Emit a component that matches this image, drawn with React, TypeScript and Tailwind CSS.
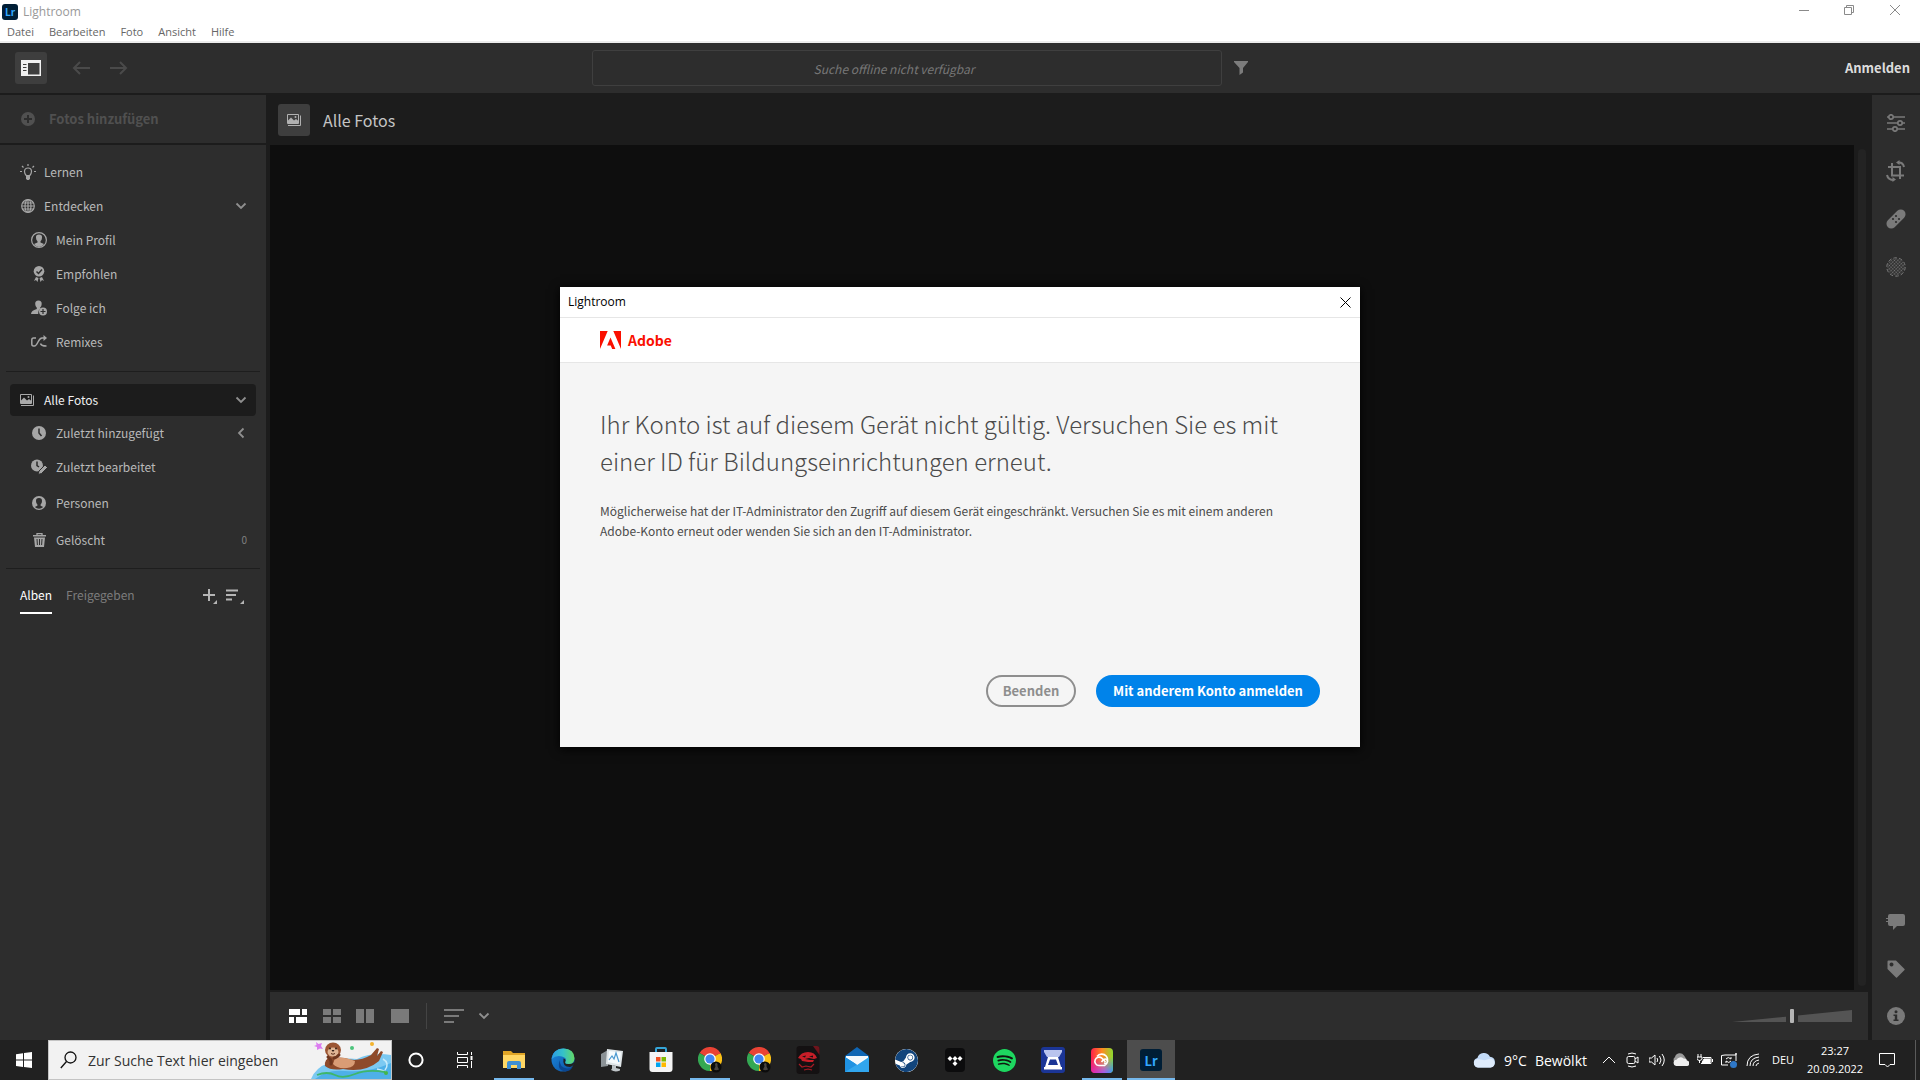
import type { ReactNode } from 'react'
import { SiSpotify, SiSteam } from 'react-icons/si'

const menu = ['Datei', 'Bearbeiten', 'Foto', 'Ansicht', 'Hilfe']

const discover = [
  { label: 'Mein Profil', icon: <ProfileIcon /> },
  { label: 'Empfohlen', icon: <BadgeIcon /> },
  { label: 'Folge ich', icon: <FollowIcon /> },
  { label: 'Remixes', icon: <RemixIcon /> },
]

const editTools = [
  { label: 'Bearbeiten', icon: <SlidersIcon /> },
  { label: 'Zuschneiden', icon: <CropIcon /> },
  { label: 'Reparatur', icon: <BandageIcon /> },
  { label: 'Maskieren', icon: <MaskIcon /> },
]

const infoTools = [
  { label: 'Kommentare', icon: <CommentIcon /> },
  { label: 'Stichwörter', icon: <TagIcon /> },
  { label: 'Info', icon: <InfoIcon /> },
]

const apps = [
  { label: 'Cortana', icon: <CortanaIcon />, state: '' },
  { label: 'Aktive Anwendungen', icon: <TaskViewIcon />, state: '' },
  { label: 'Explorer', icon: <ExplorerIcon />, state: 'open' },
  { label: 'Edge', icon: <EdgeIcon />, state: '' },
  { label: 'Leistung', icon: <MonitorIcon />, state: '' },
  { label: 'Store', icon: <StoreIcon />, state: '' },
  { label: 'Chrome', icon: <ChromeIcon />, state: 'open' },
  { label: 'Chrome Profil', icon: <ChromeIcon />, state: '' },
  { label: 'Spiel', icon: <SkullIcon />, state: '' },
  { label: 'Mail', icon: <MailIcon />, state: '' },
  { label: 'Steam', icon: <SteamIcon />, state: '' },
  { label: 'Tidal', icon: <TidalIcon />, state: '' },
  { label: 'Spotify', icon: <SpotifyIcon />, state: '' },
  { label: 'Scanner', icon: <ScannerIcon />, state: '' },
  { label: 'Creative Cloud', icon: <CloudAppIcon />, state: 'open' },
  { label: 'Lightroom', icon: <LrLogo className="size-[22px] text-[13px]" />, state: 'active' },
]

export default function App() {
  return (
    <div className="relative flex h-screen flex-col overflow-hidden bg-[#1c1c1c] font-['Noto_Sans_CJK_SC',sans-serif] text-[12px] text-[#b9b9b9]">
      <TitleBar />
      <TopBar />
      <div className="flex min-h-0 flex-1 pt-0.5">
        <Sidebar />
        <main className="ml-1 flex min-w-0 flex-1 flex-col">
          <header className="flex h-[50px] shrink-0 items-center gap-[13px] pl-2">
            <button aria-label="Alben" className="flex size-8 items-center justify-center rounded-[3px] bg-[#3e3e3e]">
              <PhotosIcon className="h-3 w-3.5 text-[#b0b0b0]" />
            </button>
            <h1 className="text-[16px] text-[#c4c4c4]">Alle Fotos</h1>
          </header>
          <div className="flex min-h-0 flex-1">
            <div className="flex-1 bg-[#0e0e0e]" />
            <div className="mx-1 my-1 w-2 rounded-full bg-[#232323]" />
          </div>
          <Footer />
        </main>
        <aside className="ml-0.5 flex w-12 flex-col justify-between bg-[#2d2d2d] pt-1 text-[#7a7a7a]">
          <div>
            {editTools.map((t) => (
              <button key={t.label} aria-label={t.label} className="flex size-12 items-center justify-center">{t.icon}</button>
            ))}
          </div>
          <div>
            {infoTools.map((t) => (
              <button key={t.label} aria-label={t.label} className="flex size-12 items-center justify-center">{t.icon}</button>
            ))}
          </div>
        </aside>
      </div>
      <Taskbar />
      <AccountDialog />
    </div>
  )
}

function TitleBar() {
  return (
    <div className="shrink-0 border-b-2 border-[#ececec] bg-white font-['Open_Sans',sans-serif]">
      <div className="flex h-6 items-center">
        <LrLogo className="ml-0.5 size-4 text-[10px]" />
        <span className="ml-[5px] text-[12px] text-[#999]">Lightroom</span>
        <div className="ml-auto flex h-6 pr-0.5 pb-1 text-[#8a8a8a]">
          <button aria-label="Minimieren" className="flex w-[45px] items-center justify-center">
            <svg width="10" height="10"><path d="M0 5.500h10" stroke="currentColor" /></svg>
          </button>
          <button aria-label="Verkleinern" className="flex w-[46px] items-center justify-center">
            <svg width="10" height="10" fill="none" stroke="currentColor"><path d="M.5 2.500h7v7h-7zM2.500 2.500v-2h7v7h-2" /></svg>
          </button>
          <button aria-label="Schließen" className="flex w-[46px] items-center justify-center">
            <svg width="10" height="10" stroke="currentColor"><path d="M0 0l10 10M10 0L0 10" /></svg>
          </button>
        </div>
      </div>
      <nav className="flex h-[17px] items-center gap-[15px] pl-[7px] text-[11px] text-[#666]">
        {menu.map((m) => (
          <button key={m}>{m}</button>
        ))}
      </nav>
    </div>
  )
}

function TopBar() {
  return (
    <div className="grid h-[50px] shrink-0 grid-cols-[592fr_630px_698fr] items-center bg-[#2d2d2d]">
      <div className="flex items-center pl-[15px]">
        <button aria-label="Seitenleiste" className="flex size-8 items-center justify-center rounded-[3px] bg-[#3e3e3e] text-[#f0f0f0]">
          <svg width="20" height="16" viewBox="0 0 20 16">
            <path fillRule="evenodd" fill="currentColor" d="M0 0h20v16H0zM7 3v11.500h11.500V3zM2 4h3.500v1H2zM2 7h3.500v1H2zM2 10h3.500v1H2z" />
          </svg>
        </button>
        <button aria-label="Zurück" disabled className="ml-[25px] text-[#4a4a4a]">
          <ArrowIcon />
        </button>
        <button aria-label="Vorwärts" disabled className="ml-5 rotate-180 text-[#4a4a4a]">
          <ArrowIcon />
        </button>
      </div>
      <input
        aria-label="Suche"
        disabled
        placeholder="Suche offline nicht verfügbar"
        className="h-9 rounded-[3px] border border-[#3f3f3f] bg-transparent pr-[26px] text-center text-[12px] italic placeholder:text-[#777]"
      />
      <div className="flex items-center justify-between pr-2.5 pl-3">
        <button aria-label="Filter" className="text-[#7c7c7c]">
          <svg width="14" height="14" viewBox="0 0 14 14" fill="currentColor"><path d="M0 0h14v1L9 7v4.500L5.500 14V7L0 1z" /></svg>
        </button>
        <button className="text-[13px] font-bold text-[#dcdcdc]">Anmelden</button>
      </div>
    </div>
  )
}

function Sidebar() {
  return (
    <aside className="flex w-[266px] shrink-0 flex-col">
      <button disabled className="flex h-12 shrink-0 items-center gap-3.5 bg-[#2d2d2d] pl-[21px] text-[13px] font-bold text-[#505050]">
        <svg width="14" height="14" viewBox="0 0 14 14"><circle cx="7" cy="7" r="7" fill="currentColor" /><path d="M7 3v8M3 7h8" stroke="#2d2d2d" strokeWidth="2" /></svg>
        Fotos hinzufügen
      </button>
      <nav className="mt-0.5 flex-1 bg-[#2d2d2d] px-1.5 pt-2.5">
        <Row icon={<BulbIcon />} label="Lernen" />
        <Row icon={<GlobeIcon />} label="Entdecken" end={<Chevron />} />
        {discover.map((d) => (
          <Row key={d.label} icon={d.icon} label={d.label} nested />
        ))}
        <hr className="mt-3 border-[#1e1e1e]" />
        <button className="mx-1 mt-3 flex h-8 w-[246px] items-center rounded bg-[#1c1c1c] pr-[9px] pl-2.5 text-[#f0f0f0]">
          <span className="w-6"><PhotosIcon className="h-3 w-3.5 text-[#aaa]" /></span>
          <span className="flex-1 text-left">Alle Fotos</span>
          <Chevron />
        </button>
        <Row icon={<ClockIcon />} label="Zuletzt hinzugefügt" end={<Chevron className="rotate-90" />} nested />
        <Row icon={<ClockEditIcon />} label="Zuletzt bearbeitet" nested />
        <Row icon={<PersonIcon />} label="Personen" nested tall />
        <Row icon={<TrashIcon />} label="Gelöscht" end={<span className="text-[10px] text-[#808080]">0</span>} nested tall />
        <hr className="mt-2.5 border-[#1e1e1e]" />
        <div className="flex pt-[9px] pr-3 pl-3.5">
          <button className="h-9 border-b-2 border-white text-white">Alben</button>
          <button className="ml-3.5 h-9 border-b-2 border-transparent text-[#7c7c7c]">Freigegeben</button>
          <button aria-label="Album hinzufügen" className="ml-auto text-[#b5b5b5]">
            <svg width="16" height="18" viewBox="0 0 16 18"><path d="M7 2v12M1 8h12" stroke="currentColor" strokeWidth="2" /><path d="M15 13v4h-4z" fill="currentColor" /></svg>
          </button>
          <button aria-label="Sortieren" className="mr-1 ml-2 text-[#b5b5b5]">
            <svg width="18" height="18" viewBox="0 0 18 18"><path d="M0 3.500h12M0 8h10M0 12.500h6" stroke="currentColor" strokeWidth="2" /><path d="M18 13v4h-4z" fill="currentColor" /></svg>
          </button>
        </div>
      </nav>
    </aside>
  )
}

type RowProps = { icon: ReactNode; label: string; end?: ReactNode; nested?: boolean; tall?: boolean }

function Row({ icon, label, end, nested, tall }: RowProps) {
  return (
    <button className={`flex w-full items-center pr-[13px] ${tall ? 'h-[37px]' : 'h-[34px]'} ${nested ? 'pl-[25px]' : 'pl-3.5'}`}>
      <span className={`text-[#a6a6a6] ${nested ? 'w-[25px]' : 'w-6'}`}>{icon}</span>
      <span className="flex-1 text-left">{label}</span>
      {end}
    </button>
  )
}

function Footer() {
  return (
    <footer className="mt-0.5 mr-0.5 flex h-12 shrink-0 items-center bg-[#2d2d2d] pr-4 pl-[19px] text-[#7a7a7a]">
      <button aria-label="Fotoraster" className="text-white">
        <svg width="18" height="14" fill="currentColor"><path d="M0 0h11v6H0zM13 0h5v6h-5zM0 8h5v6H0zM7 8h11v6H7z" /></svg>
      </button>
      <button aria-label="Quadratraster" className="ml-4">
        <svg width="18" height="14" fill="currentColor"><path d="M0 0h8v6H0zM10 0h8v6h-8zM0 8h8v6H0zM10 8h8v6h-8z" /></svg>
      </button>
      <button aria-label="Vergleichen" className="ml-[15px]">
        <svg width="18" height="14" fill="currentColor"><path d="M0 0h8v14H0zM10 0h8v14h-8z" /></svg>
      </button>
      <button aria-label="Detail" className="ml-[17px]">
        <svg width="18" height="14" fill="currentColor"><path d="M0 0h18v14H0z" /></svg>
      </button>
      <div className="ml-[17px] h-[26px] w-px bg-[#444]" />
      <button aria-label="Sortieren" className="ml-[17px] flex items-center gap-[13px]">
        <svg width="21" height="14" viewBox="0 0 21 14"><path d="M0 1h20M0 7h15M0 13h10" stroke="currentColor" strokeWidth="2" /></svg>
        <Chevron className="text-[#8a8a8a]" />
      </button>
      <div className="relative ml-auto h-3.5 w-[120px]">
        <svg className="absolute inset-0" width="120" height="14"><path d="M0 13L120 1v12z" fill="#545454" /></svg>
        <input
          type="range"
          aria-label="Miniaturgröße"
          defaultValue={50}
          className="absolute inset-0 w-full appearance-none bg-transparent [&::-webkit-slider-thumb]:h-3.5 [&::-webkit-slider-thumb]:w-1 [&::-webkit-slider-thumb]:appearance-none [&::-webkit-slider-thumb]:rounded-[1px] [&::-webkit-slider-thumb]:bg-[#b5b5b5] [&::-webkit-slider-thumb]:shadow-[-4px_0_0_#2d2d2d,4px_0_0_#2d2d2d]"
        />
      </div>
    </footer>
  )
}

function AccountDialog() {
  return (
    <div className="pointer-events-none absolute inset-0 flex items-center justify-center pb-[46px]">
      <div role="dialog" aria-label="Lightroom" className="pointer-events-auto flex h-[460px] w-[800px] flex-col bg-[#f5f5f5] text-[#4b4b4b] shadow-[0_2px_10px_#000]">
        <div className="flex h-[30px] items-center justify-between bg-white pr-[9px] pl-2 font-['Open_Sans',sans-serif] text-[12px] text-black">
          Lightroom
          <button aria-label="Schließen">
            <svg width="11" height="11" stroke="currentColor"><path d="M.5.5l10 10M10.500.5l-10 10" /></svg>
          </button>
        </div>
        <div className="flex h-[46px] items-center border-y border-[#e6e6e6] bg-white pl-10 text-[#fa0f00]">
          <svg width="21" height="18" viewBox="0 0 21 18" fill="currentColor"><path d="M0 0h7.700L0 18zM13.300 0H21v18zM10.500 6.600L15.400 18h-3.200l-1.500-3.600H7.100z" /></svg>
          <span className="ml-[7px] text-[14px] font-bold">Adobe</span>
        </div>
        <div className="flex flex-1 flex-col px-10 pt-[42px]">
          <h2 className="text-[24px] leading-[37px] font-light">
            Ihr Konto ist auf diesem Gerät nicht gültig. Versuchen Sie es mit einer ID für Bildungseinrichtungen erneut.
          </h2>
          <p className="mt-[22px] text-[12px] leading-5">
            Möglicherweise hat der IT-Administrator den Zugriff auf diesem Gerät eingeschränkt. Versuchen Sie es mit einem anderen{' '}
            <span className="whitespace-nowrap">Adobe-Konto</span> erneut oder wenden Sie sich an den IT-Administrator.
          </p>
          <div className="mt-auto mb-10 flex justify-end gap-5 text-[13px] font-bold">
            <button className="h-8 w-[90px] rounded-full border-2 border-[#8e8e8e] text-[#8e8e8e]">Beenden</button>
            <button className="h-8 w-56 rounded-full bg-[#0083ea] text-white">Mit anderem Konto anmelden</button>
          </div>
        </div>
      </div>
    </div>
  )
}

function Taskbar() {
  return (
    <div className="flex h-10 shrink-0 items-center bg-[#212121] font-['Open_Sans',sans-serif] text-white">
      <button aria-label="Start" className="flex w-12 justify-center">
        <svg width="16" height="16" viewBox="0 0 16 16" fill="currentColor"><path d="M0 2.200l7-1v6.400H0zM8 1.100L16 0v7.600H8zM0 8.400h7v6.500l-7-1zM8 8.400h8V16l-8-1.100z" /></svg>
      </button>
      <div className="relative flex h-10 w-[344px] items-center border border-[#c4c4c4] bg-[#f2f2f2] text-black">
        <svg className="ml-[11px]" width="18" height="18" viewBox="0 0 18 18" fill="none" stroke="#111" strokeWidth="1.300"><circle cx="10.500" cy="6.500" r="5.500" /><path d="M6.500 10.500L.8 17" /></svg>
        <input aria-label="Suche" placeholder="Zur Suche Text hier eingeben" className="ml-2.5 w-[220px] bg-transparent text-[14px] placeholder:text-[#333]" />
        <Otter />
      </div>
      <div className="flex gap-px">
        {apps.map((a) => (
          <button
            key={a.label}
            aria-label={a.label}
            className={`relative flex h-10 w-12 items-center justify-center ${a.state === 'active' ? 'bg-[#4d4d4d]' : ''}`}
          >
            {a.icon}
            {a.state && <span className={`absolute bottom-0 h-0.5 bg-[#76b9ed] ${a.state === 'active' ? 'inset-x-0' : 'inset-x-1'}`} />}
          </button>
        ))}
      </div>
      <div className="ml-auto flex items-center">
        <button className="flex items-center text-[14px]">
          <svg width="23" height="16" viewBox="0 0 23 16"><path d="M5 15.500a4.800 4.800 0 0 1-.6-9.400A6.700 6.700 0 0 1 16.900 4.800 5.400 5.400 0 0 1 17.500 15.500z" fill="#c3dbf8" /><path d="M5 15.500a4.500 4.500 0 0 1-3-7.500c4-3 8 2 12-.5 4-2 8 0 7.500 4a4.500 4.500 0 0 1-4 4z" fill="#deebfb" /></svg>
          <span className="ml-2">9°C</span>
          <span className="ml-2">Bewölkt</span>
        </button>
        <div className="ml-2.5 flex items-center">
          <TrayButton label="Ausgeblendete Symbole">
            <path d="M2 11l6-6 6 6" />
          </TrayButton>
          <TrayButton label="Besprechung">
            <rect x="2" y="4.500" width="8" height="7" rx="1.500" /><path d="M10 7l3-2v6l-3-2M3 2q4-2 8 0M3 14q4 2 8 0" />
          </TrayButton>
          <TrayButton label="Lautstärke">
            <path d="M0 6v4h2.500L6 13V3L2.500 6zM8 6q1.500 2 0 4M10.500 4q3 4 0 8M13 2q4.500 6 0 12" />
          </TrayButton>
          <TrayButton label="OneDrive">
            <path d="M3 11a3.300 3.300 0 0 1-1-6 5 5 0 0 1 9-1.500L14 8z" fill="#9a9a9a" stroke="none" /><path d="M3 14a3.200 3.200 0 0 1 .5-6.300 4.500 4.500 0 0 1 7-1.200 3.500 3.500 0 0 1 3.500 2 2.800 2.800 0 0 1 0 5.500z" fill="#eee" stroke="none" />
          </TrayButton>
          <TrayButton label="Akku">
            <path d="M1 2v3M4 2v3M0 5h5v2q0 1-2.500 1.500Q0 8 0 7zM2.500 8v3" /><path d="M6 5.500h8v6H4" /><path d="M7 7h6v3.500H5z" fill="currentColor" /><path d="M15.500 7v3" />
          </TrayButton>
          <TrayButton label="Anzeige">
            <path d="M7 13H.5V3.500L4 3h11V1v8M5 7q2-3 5 0V5M10 9q-2 3-5 0v2" /><circle cx="12.500" cy="12.500" r="3.500" fill="#2f78c8" stroke="none" />
          </TrayButton>
          <TrayButton label="Netzwerk">
            <path d="M2 14Q2 3 14 2M5 14q0-8 9-9M8 14q0-5 6-6M11 14q0-2 3-3" />
          </TrayButton>
        </div>
        <button className="ml-1.5 w-6 text-[11px]">DEU</button>
        <button className="ml-1.5 w-[68px] text-[11px] leading-[18px]">
          23:27
          <br />
          20.09.2022
        </button>
        <button aria-label="Benachrichtigungen" className="flex w-[35px] justify-center">
          <svg width="16" height="16" viewBox="0 0 16 16" fill="none" stroke="currentColor"><path d="M.5 1.500h15v11H11L8.500 15 6 12.500H.5z" /></svg>
        </button>
        <div className="mr-1 ml-[11px] h-10 w-px bg-[#5a5a5a]" />
      </div>
    </div>
  )
}

function TrayButton({ label, children }: { label: string; children: ReactNode }) {
  return (
    <button aria-label={label} className="flex w-6 justify-center">
      <svg width="16" height="16" viewBox="0 0 16 16" fill="none" stroke="currentColor">{children}</svg>
    </button>
  )
}

function LrLogo({ className }: { className: string }) {
  return (
    <span className={`flex items-center justify-center rounded-[3px] bg-[#001e36] font-['Noto_Sans_CJK_SC',sans-serif] leading-none font-bold text-[#31a8ff] ${className}`}>
      Lr
    </span>
  )
}

function Chevron({ className = '' }: { className?: string }) {
  return (
    <svg className={className} width="12" height="12" viewBox="0 0 12 12" fill="none" stroke="#8f8f8f" strokeWidth="1.800"><path d="M1.500 3.500L6 8l4.500-4.500" /></svg>
  )
}

function ArrowIcon() {
  return (
    <svg width="18" height="14" viewBox="0 0 18 14" fill="none" stroke="currentColor" strokeWidth="2"><path d="M18 7H2M8 1L2 7l6 6" /></svg>
  )
}

function PhotosIcon({ className }: { className: string }) {
  return (
    <svg className={className} viewBox="0 0 14 12" fill="none" stroke="currentColor">
      <path d="M.5.5h11v9H.5zM13.500 1.500v10H1" /><path d="M1 9V6.500l3-3 3 3 2-1.500 2.500 2V9z" fill="currentColor" stroke="none" /><circle cx="8.500" cy="3" r="1" fill="currentColor" stroke="none" />
    </svg>
  )
}

function BulbIcon() {
  return (
    <svg width="16" height="16" viewBox="0 0 16 16" fill="none" stroke="currentColor" strokeWidth="1.200">
      <path d="M6.200 11.500Q4.500 9.500 4.500 7.500a3.500 3.500 0 0 1 7 0q0 2-1.700 4z" /><path d="M6 12h4v2.500l-1 1.500H7l-1-1.500z" fill="currentColor" stroke="none" /><path d="M8 0v2M2 2l1.500 1.500M14 2l-1.500 1.500M0 7.500h2M14 7.500h2" />
    </svg>
  )
}

function GlobeIcon() {
  return (
    <svg className="ml-px" width="14" height="14" viewBox="0 0 14 14" fill="none" stroke="currentColor" strokeWidth="1.200">
      <circle cx="7" cy="7" r="6.300" /><ellipse cx="7" cy="7" rx="3" ry="6.300" /><path d="M7 1v12M1 7h12M1.500 4h11M1.500 10h11" />
    </svg>
  )
}

function ProfileIcon() {
  return (
    <svg width="16" height="16" viewBox="0 0 16 16">
      <circle cx="8" cy="8" r="7.400" fill="none" stroke="currentColor" strokeWidth="1.200" />
      <path d="M8 2.500a3 3 0 0 1 3 3.300q0 2-1.500 3.500v1.200l3.500 1.500q-2 3-5 3t-5-3l3.500-1.500V9.300Q5 7.800 5 5.800a3 3 0 0 1 3-3.300z" fill="currentColor" />
    </svg>
  )
}

function BadgeIcon() {
  return (
    <svg width="16" height="16" viewBox="0 0 16 16">
      <circle cx="8" cy="5.300" r="5.300" fill="currentColor" /><path d="M5.500 5.500l2 2 3.500-4" fill="none" stroke="#2d2d2d" strokeWidth="1.500" />
      <path d="M5 11l2.500 1-1 4-1.500-2-2 1zM11 11l-2.500 1 1 4 1.500-2 2 1z" fill="currentColor" />
    </svg>
  )
}

function FollowIcon() {
  return (
    <svg width="16" height="16" viewBox="0 0 16 16">
      <path d="M7.500.5a3.300 3.300 0 0 1 3.200 3.500q0 2-1.600 3.700v1.200Q7.200 10 7.200 14H0q0-3.500 5.800-5V7.700Q4.200 6 4.200 4A3.300 3.300 0 0 1 7.500.5z" fill="currentColor" />
      <circle cx="12" cy="11.500" r="4" fill="currentColor" /><path d="M12 9v5M9.500 11.500h5" stroke="#2d2d2d" strokeWidth="1.200" />
    </svg>
  )
}

function RemixIcon() {
  return (
    <svg width="16" height="16" viewBox="0 0 16 16" fill="none" stroke="currentColor" strokeWidth="1.500">
      <path d="M5 4H2.500Q.8 4 .8 6v4q0 2 1.700 2h1Q5 12 7 8t4-4h2.500M9.500 9.500Q10 12 15.500 12" /><path d="M12.500 1L16 4l-3.500 3z" fill="currentColor" stroke="none" />
    </svg>
  )
}

function ClockIcon() {
  return (
    <svg className="ml-px" width="14" height="14" viewBox="0 0 14 14"><circle cx="7" cy="7" r="7" fill="currentColor" /><path d="M7 2.500V7l2.500 3" fill="none" stroke="#2d2d2d" strokeWidth="1.500" /></svg>
  )
}

function ClockEditIcon() {
  return (
    <svg width="16" height="16" viewBox="0 0 16 16">
      <circle cx="6" cy="6.500" r="6" fill="currentColor" /><path d="M6 2.500v4l2 1.500" fill="none" stroke="#2d2d2d" strokeWidth="1.500" />
      <path d="M7 15.500l1-3.500 6-6 2.500 2.500-6 6z" fill="currentColor" stroke="#2d2d2d" />
    </svg>
  )
}

function PersonIcon() {
  return (
    <svg className="ml-px" width="14" height="14" viewBox="0 0 14 14">
      <circle cx="7" cy="7" r="7" fill="currentColor" />
      <path d="M7 2a3 3 0 0 1 3 3.200q0 1.800-1.400 3.300v1.300l2.600 1.200Q9.300 12.800 7 12.800t-4.200-1.800l2.600-1.200V8.500Q4 7 4 5.200A3 3 0 0 1 7 2z" fill="#2d2d2d" />
    </svg>
  )
}

function TrashIcon() {
  return (
    <svg className="ml-0.5" width="13" height="14" viewBox="0 0 13 14">
      <path d="M4 2V.7h5V2" fill="none" stroke="currentColor" strokeWidth="1.300" /><path d="M0 2h13v1.500H0zM1 4.500h11L11 14H2z" fill="currentColor" /><path d="M4 6l.4 6M6.500 6v6M9 6l-.4 6" stroke="#2d2d2d" />
    </svg>
  )
}

function SlidersIcon() {
  return (
    <svg width="18" height="18" viewBox="0 0 18 18" fill="none" stroke="currentColor" strokeWidth="1.700">
      <path d="M0 3h1.800M6.500 3H18M0 9h10.500M15.500 9H18M0 15h5.500M10.500 15H18" /><circle cx="4" cy="3" r="2.200" /><circle cx="13" cy="9" r="2.200" /><circle cx="8" cy="15" r="2.200" />
    </svg>
  )
}

function CropIcon() {
  return (
    <svg width="20" height="22" viewBox="0 0 20 22" fill="none" stroke="currentColor" strokeWidth="2">
      <path d="M6 3v12.500h12M2 7h12v12" /><path d="M12 2.500q5-.5 6 4.500M8 20q-6 0-7-5" /><path d="M13.500 0v5L10 2.500zM6.500 17v5l3.500-2.500z" fill="currentColor" stroke="none" />
    </svg>
  )
}

function BandageIcon() {
  return (
    <svg width="20" height="20" viewBox="0 0 20 20">
      <rect x="-1.500" y="5.200" width="23" height="9.600" rx="4.800" fill="currentColor" transform="rotate(-45 10 10)" />
      <g fill="#2d2d2d"><circle cx="10" cy="7" r="1.100" /><circle cx="7" cy="10" r="1.100" /><circle cx="13" cy="10" r="1.100" /><circle cx="10" cy="13" r="1.100" /></g>
    </svg>
  )
}

function MaskIcon() {
  return (
    <svg width="20" height="20" viewBox="0 0 20 20">
      <defs><pattern id="dots" width="2.400" height="2.400" patternUnits="userSpaceOnUse" patternTransform="rotate(45)"><circle cx="1.200" cy="1.200" r=".75" fill="currentColor" /></pattern></defs>
      <circle cx="10" cy="10" r="8.500" fill="url(#dots)" /><circle cx="10" cy="10" r="9.200" fill="none" stroke="currentColor" strokeDasharray="3.600 2.180" />
    </svg>
  )
}

function CommentIcon() {
  return (
    <svg className="mt-1" width="20" height="16" viewBox="0 0 20 16" fill="currentColor"><path d="M4 0h13q2 0 2 2v8q0 2-2 2h-6l-4 4v-4H4q-2 0-2-2V8H0V7h2V5H0V4h2V2q0-2 2-2z" /></svg>
  )
}

function TagIcon() {
  return (
    <svg className="mt-0.5" width="18" height="18" viewBox="0 0 18 18" fill="currentColor"><path fillRule="evenodd" d="M1.500.5H9L17.500 9q.5.500 0 1l-7.500 7.500q-.5.500-1 0L.5 9V1.500q0-1 1-1zM4.500 2.500a2 2 0 1 0 .01 0z" /></svg>
  )
}

function InfoIcon() {
  return (
    <svg width="18" height="18" viewBox="0 0 18 18"><circle cx="9" cy="9" r="9" fill="currentColor" /><circle cx="9" cy="4.700" r="1.500" fill="#2d2d2d" /><path d="M6.500 7.500h3.700v5h1.300V14h-5v-1.500h1.300V9H6.500z" fill="#2d2d2d" /></svg>
  )
}

function CortanaIcon() {
  return (
    <svg width="16" height="16" viewBox="0 0 16 16"><circle cx="8" cy="8" r="6.600" fill="none" stroke="#fff" strokeWidth="2" /></svg>
  )
}

function TaskViewIcon() {
  return (
    <svg width="16" height="16" viewBox="0 0 16 16" fill="none" stroke="#fff"><path d="M.5 0v2.500h10V0M.5 5.500h10v5H.5zM.5 16v-2.500h10V16M14.500 0v3M14.500 9v7" /><path d="M13.500 4h2v4h-2z" fill="#fff" stroke="none" /></svg>
  )
}

function ExplorerIcon() {
  return (
    <svg width="22" height="20" viewBox="0 0 22 20"><path d="M0 1h8l2 2h12v15H0z" fill="#e0a526" /><path d="M0 5h22v13H0z" fill="#ffd764" /><path d="M4 19v-6q0-2 2-2h10q2 0 2 2v6h-4v-4H8v4z" fill="#3f8fd2" /></svg>
  )
}

function EdgeIcon() {
  return (
    <svg width="24" height="24" viewBox="0 0 24 24">
      <defs>
        <linearGradient id="edgeTop" x1="0" y1="0" x2="1" y2="0"><stop offset="0" stopColor="#2b9be6" /><stop offset=".5" stopColor="#35c1c9" /><stop offset="1" stopColor="#64d964" /></linearGradient>
        <linearGradient id="edgeLow" x1="0" y1="0" x2="1" y2="1"><stop offset="0" stopColor="#1c8ae0" /><stop offset="1" stopColor="#0c4f9e" /></linearGradient>
      </defs>
      <circle cx="12" cy="12" r="11.500" fill="url(#edgeLow)" />
      <path d="M9 12q-1 7 7 8.500 4 0 5.500-1.500-2 4-7 4.500Q5 22 9 12z" fill="#0b4690" />
      <path d="M12.500 10.500q3 1 1.800 3.500-.5 2 3.200 2 4 0 6.500-2.500-1 4.500-5 5.500-8 0-6.500-8.500z" fill="#212121" />
      <path d="M.6 11Q2 .5 12.500.5q11 .5 11 10Q23 16 17.500 16q-4 0-3-2.200 2-3.800-3.500-5.300Q5 7 .6 11z" fill="url(#edgeTop)" />
    </svg>
  )
}

function MonitorIcon() {
  return (
    <svg width="24" height="24" viewBox="0 0 24 24"><path d="M1 6l7-4v16l-7 1z" fill="#8b9296" /><path d="M7 1l16 2-2 16-15-3z" fill="#dfe5e8" /><path d="M9 3l12 1.500-1.500 12L8 14z" fill="#f7fbfd" /><path d="M9 12l3-4 2 3 2-6 3 9" fill="none" stroke="#4a98cf" strokeWidth="1.200" /><path d="M12 17l4 1v2l4 1v1.500q-5 2-9-.5l1-1.500z" fill="#bfc5c8" /></svg>
  )
}

function StoreIcon() {
  return (
    <svg width="24" height="26" viewBox="0 0 24 26"><path d="M7 7V2q0-1 1-1h8q1 0 1 1v5" fill="none" stroke="#35a5d8" strokeWidth="2" /><path d="M.5 5h23v17q0 3-3 3h-17q-3 0-3-3z" fill="#f4f4f4" /><path d="M7 10h4.500v4.500H7z" fill="#f25022" /><path d="M12.500 10H17v4.500h-4.500z" fill="#7fba00" /><path d="M7 15.500h4.500V20H7z" fill="#00a4ef" /><path d="M12.500 15.500H17V20h-4.500z" fill="#ffb900" /></svg>
  )
}

function ChromeIcon() {
  return (
    <svg width="24" height="26" viewBox="0 0 24 26">
      <path d="M12 12L1.600 6A12 12 0 0 1 22.400 6z" fill="#ea4335" /><path d="M12 12L22.400 6A12 12 0 0 1 12 24z" fill="#fbc116" /><path d="M12 12v12A12 12 0 0 1 1.600 6z" fill="#34a853" />
      <path d="M12 6h10.400v1H12z" fill="#ea4335" /><circle cx="12" cy="12" r="5.800" fill="#fff" /><circle cx="12" cy="12" r="4.600" fill="#4285f4" />
      <circle cx="18" cy="20" r="5.500" fill="#0c0c0c" /><path d="M17 17q1.500-2 2.500 0v2.500l1.500 3q-3 1.500-5 0l1.500-3z" fill="#4a4540" />
    </svg>
  )
}

function SkullIcon() {
  return (
    <svg width="24" height="28" viewBox="0 0 24 28"><rect x=".5" y="0" width="23" height="28" rx="3" fill="#141112" /><path d="M17 0h4q2.500 0 2.500 3v6z" fill="#6e141c" /><path d="M2 12q3-6 10-6 7 0 9 6l-3 1-5-1-4 1 5 1 4 0-1 2-5 0-6-1-1-2z" fill="#c81e28" /><path d="M3 18l3 3 4-1 5 1 3-3M8 24l4-1 4 1" fill="none" stroke="#a81a24" strokeWidth="1.200" /><path d="M6 10.500l4-1-1 2zM13 10.500l4-1v2z" fill="#141112" /></svg>
  )
}

function MailIcon() {
  return (
    <svg width="24" height="26" viewBox="0 0 24 26"><path d="M0 9L12 0l12 9v16H0z" fill="#0f66b4" /><path d="M1 9h22v9H1z" fill="#fff" /><path d="M0 10l12 8 12-8v15H0z" fill="#31a6ee" /><path d="M0 10l12 7.500L0 25z" fill="#1f92e2" /><path d="M1 9h22L12 17.500z" fill="#f3f8fc" /></svg>
  )
}

function SteamIcon() {
  return (
    <span className="flex size-[23px] items-center justify-center overflow-hidden rounded-full bg-white text-[#12457c]">
      <SiSteam className="size-[23px]" />
    </span>
  )
}

function TidalIcon() {
  return (
    <svg width="20" height="24" viewBox="0 0 20 24"><rect width="20" height="24" rx="4" fill="#0c0c0d" /><path d="M5 8l2.500 2.500L5 13l-2.500-2.500zM10 8l2.500 2.500L10 13l-2.500-2.500zM15 8l2.500 2.500L15 13l-2.500-2.500zM10 13l2.500 2.500L10 18l-2.500-2.500z" fill="#fff" /></svg>
  )
}

function SpotifyIcon() {
  return (
    <span className="rounded-full bg-[#10150f]">
      <SiSpotify className="size-[23px] text-[#1ed760]" />
    </span>
  )
}

function ScannerIcon() {
  return (
    <svg width="24" height="28" viewBox="0 0 24 28"><rect y="1" width="24" height="26" rx="3" fill="#1b3596" /><path d="M3 4h18v2l-3 5H6L3 6z" fill="#b9c4ee" /><path d="M7 11h10l3 10H4zM9 13.500L7 19h10l-2-5.500z" fill="#fff" fillRule="evenodd" /><path d="M3 21h18v2.500H3z" fill="#fff" /></svg>
  )
}

function CloudAppIcon() {
  return (
    <svg width="22" height="25" viewBox="0 0 22 25">
      <defs>
        <linearGradient id="ccH" x1="0" y1="0" x2="1" y2="0"><stop offset="0" stopColor="#ff1f4b" /><stop offset=".5" stopColor="#ff8a1f" /><stop offset="1" stopColor="#8ddb2f" /></linearGradient>
        <linearGradient id="ccV" x1="0" y1="0" x2="1" y2="0"><stop offset="0" stopColor="#e81fa8" /><stop offset=".6" stopColor="#a05cf0" /><stop offset="1" stopColor="#2f9bff" /></linearGradient>
        <linearGradient id="ccFade" x1="0" y1="0" x2="0" y2="1"><stop offset=".35" stopColor="#000" /><stop offset="1" stopColor="#fff" /></linearGradient>
        <mask id="ccMask"><rect width="22" height="25" fill="url(#ccFade)" /></mask>
      </defs>
      <rect width="22" height="25" rx="4" fill="url(#ccH)" /><rect width="22" height="25" rx="4" fill="url(#ccV)" mask="url(#ccMask)" />
      <g fill="none" stroke="#fff" strokeWidth="1.600"><path d="M11 17.500H8a4.200 4.200 0 1 1 3-7.200l3.500 3.700" /><path d="M6 8.500a6 6 0 1 1 7.500 9H11M10.500 14l2-2.300q2-1.500 3.500.3 1.200 2.500-1 3.500l-2-.5" /></g>
    </svg>
  )
}

function Otter() {
  return (
    <svg className="absolute right-0 bottom-0" width="80" height="38" viewBox="0 0 80 38">
      <path d="M0 38Q5 26 18 22q14-6 28-4 14-7 34-4v24z" fill="#7cc9f2" />
      <path d="M4 38q12-10 30-8 24 2 46-8v16z" fill="#4eb0e8" />
      <path d="M72 18q7 4 2 11M66 28q5 1 9 3" fill="none" stroke="#c7ebfb" strokeWidth="1.500" />
      <path d="M14 25q-1-7 6-9l14 1q12 5 26-3l6-7 2 1-2 7 4-5 2 1-4 9Q54 32 32 28q-12 2-18-3z" fill="#8e4a2a" />
      <path d="M24 17q10-2 20 3 0 6-8 7-10 1-14-4z" fill="#d99c75" />
      <ellipse cx="22" cy="9" rx="8" ry="7.500" fill="#9b5533" /><ellipse cx="22" cy="11" rx="5.500" ry="4.500" fill="#dfb493" />
      <path d="M20.500 9h3L22 11z" fill="#2b1710" /><circle cx="19" cy="7.500" r=".9" fill="#2b1710" /><circle cx="25" cy="7.500" r=".9" fill="#2b1710" /><path d="M20 12.500q2 1.500 4 0" fill="none" stroke="#5a2d1b" />
      <path d="M17 16q4 3 3 7M28 14q-3 3-5 3" fill="none" stroke="#6f361e" strokeWidth="3" strokeLinecap="round" />
      <path d="M6 34q10-4 18 0t20-1 30-2" fill="none" stroke="#3fb66a" strokeWidth="1.800" /><circle cx="75" cy="32" r="2" fill="#43b649" />
      <path d="M5 1l2.500 2L11 2l-1 3 2 3-3-.5L6 9V6L3 5l2.500-1z" fill="#dc7df0" /><circle cx="41" cy="7" r="2" fill="#4cc47c" /><circle cx="61" cy="3" r="2" fill="#f4b32c" />
    </svg>
  )
}
